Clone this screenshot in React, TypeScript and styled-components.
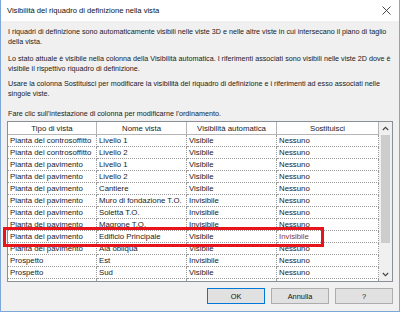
import React from "react";
import styled, {createGlobalStyle} from "styled-components";

const GlobalStyle = createGlobalStyle`
  html, body {
    margin: 0;
    padding: 0;
    background: #ffffff;
  }
  body {
    font-family: "Liberation Sans", Arial, sans-serif;
    color: #1a1a1a;
  }
`;

interface IRow {
  tipo: string;
  nome: string;
  auto: string;
  sost: string;
}

const rows: IRow[] = [
  {tipo: "Pianta del controsoffitto", nome: "Livello 1", auto: "Visibile", sost: "Nessuno"},
  {tipo: "Pianta del controsoffitto", nome: "Livello 2", auto: "Visibile", sost: "Nessuno"},
  {tipo: "Pianta del pavimento", nome: "Livello 1", auto: "Visibile", sost: "Nessuno"},
  {tipo: "Pianta del pavimento", nome: "Livello 2", auto: "Visibile", sost: "Nessuno"},
  {tipo: "Pianta del pavimento", nome: "Cantiere", auto: "Visibile", sost: "Nessuno"},
  {tipo: "Pianta del pavimento", nome: "Muro di fondazione T.O.", auto: "Invisibile", sost: "Nessuno"},
  {tipo: "Pianta del pavimento", nome: "Soletta T.O.", auto: "Invisibile", sost: "Nessuno"},
  {tipo: "Pianta del pavimento", nome: "Magrone T.O.", auto: "Invisibile", sost: "Nessuno"},
  {tipo: "Pianta del pavimento", nome: "Edificio Principale", auto: "Visibile", sost: "Invisibile"},
  {tipo: "Pianta del pavimento", nome: "Ala obliqua", auto: "Visibile", sost: "Nessuno"},
  {tipo: "Prospetto", nome: "Est", auto: "Invisibile", sost: "Nessuno"},
  {tipo: "Prospetto", nome: "Sud", auto: "Visibile", sost: "Nessuno"},
];

const columns = ["Tipo di vista", "Nome vista", "Visibilità automatica", "Sostituisci"];

const App = () => {
  return (
    <>
      <GlobalStyle/>
      <Window>
        <TitleBar>
          <span>Visibilità del riquadro di definizione nella vista</span>
          <CloseButton>
            <svg width="9" height="9" viewBox="0 0 9 9">
              <path d="M0.5 0.5 L8.5 8.5 M8.5 0.5 L0.5 8.5" stroke="#333" strokeWidth="0.9" fill="none"/>
            </svg>
          </CloseButton>
        </TitleBar>
        <Body>
          <Para gap={0}>
            I riquadri di definizione sono automaticamente visibili nelle viste 3D e nelle altre viste in cui intersecano il piano di taglio della vista.
          </Para>
          <Para gap={7}>
            Lo stato attuale è visibile nella colonna della Visibilità automatica. I riferimenti associati sono visibili nelle viste 2D dove è visibile il rispettivo riquadro di definizione.
          </Para>
          <Para gap={5}>
            Usare la colonna Sostituisci per modificare la visibilità del riquadro di definizione e i riferimenti ad esso associati nelle singole viste.
          </Para>
          <Para gap={10}>
            Fare clic sull'intestazione di colonna per modificarne l'ordinamento.
          </Para>
          <TableFrame>
            <Grid>
              <HeaderRow>
                {columns.map((c) => (
                  <HeaderCell key={c}>{c}</HeaderCell>
                ))}
              </HeaderRow>
              {rows.map((r, i) => (
                <Row key={i}>
                  <Cell>{r.tipo}</Cell>
                  <Cell>{r.nome}</Cell>
                  <Cell>{r.auto}</Cell>
                  <Cell changed={r.sost !== "Nessuno"}>{r.sost}</Cell>
                </Row>
              ))}
              <Row>
                <Cell/>
                <Cell/>
                <Cell/>
                <Cell/>
              </Row>
            </Grid>
            <ScrollBar>
              <ScrollArrow>
                <svg width="7" height="5" viewBox="0 0 7 5">
                  <path d="M0.8 4 L3.5 1.3 L6.2 4" stroke="#444" strokeWidth="1.1" fill="none"/>
                </svg>
              </ScrollArrow>
              <ScrollTrack>
                <Thumb/>
              </ScrollTrack>
              <ScrollArrow>
                <svg width="7" height="5" viewBox="0 0 7 5">
                  <path d="M0.8 1 L3.5 3.7 L6.2 1" stroke="#444" strokeWidth="1.1" fill="none"/>
                </svg>
              </ScrollArrow>
            </ScrollBar>
            <Highlight/>
          </TableFrame>
          <Footer>
            <Button primary>OK</Button>
            <Button>Annulla</Button>
            <Button>?</Button>
          </Footer>
        </Body>
      </Window>
    </>
  );
};

export default App;


const Window = styled.div`
  width: 400px;
  height: 312px;
  box-sizing: border-box;
  border: 1px solid #7fa6d8;
  border-top: none;
  background: #f0f0f0;
  display: flex;
  flex-direction: column;
  overflow: hidden;
`;

const TitleBar = styled.div`
  height: 21px;
  flex: none;
  background: #ffffff;
  display: flex;
  align-items: center;
  justify-content: space-between;
  padding: 0 7px 0 6px;
  font-size: 7.6px;
  color: #111;
`;

const CloseButton = styled.div`
  width: 12px;
  height: 12px;
  display: flex;
  align-items: center;
  justify-content: center;
`;

const Body = styled.div`
  flex: 1;
  padding: 6px 6px 0 6px;
  display: flex;
  flex-direction: column;
`;

const Para = styled.p<{ gap: number }>`
  margin: ${({gap}) => gap}px 0 0 0;
  font-size: 7.2px;
  line-height: 10px;
  padding-left: 1px;
`;

const TableFrame = styled.div`
  position: relative;
  margin-top: 2px;
  height: 161px;
  box-sizing: border-box;
  border: 1px solid #8a8f96;
  display: flex;
  background: #ffffff;
`;

const Grid = styled.div`
  flex: 1;
  overflow: hidden;
  font-size: 7.8px;
`;

const cols = "89px 90px 90px 102px";

const HeaderRow = styled.div`
  display: grid;
  grid-template-columns: ${cols};
  height: 13px;
  background: #ffffff;
`;

const HeaderCell = styled.div`
  box-sizing: border-box;
  border-right: 1px solid #b5b5b5;
  border-bottom: 1px solid #b5b5b5;
  display: flex;
  align-items: center;
  justify-content: center;
  white-space: nowrap;
  overflow: hidden;
`;

const Row = styled.div`
  display: grid;
  grid-template-columns: ${cols};
  height: 12px;
`;

const Cell = styled.div<{ changed?: boolean }>`
  box-sizing: border-box;
  border-right: 1px dotted #9a9a9a;
  border-bottom: 1px dotted #9a9a9a;
  padding-left: 2px;
  display: flex;
  align-items: center;
  white-space: nowrap;
  overflow: hidden;
  color: ${({changed}) => (changed ? "#8a3a2a" : "#1a1a1a")};
`;

const ScrollBar = styled.div`
  width: 13px;
  flex: none;
  background: #f0f0f0;
  display: flex;
  flex-direction: column;
`;

const ScrollArrow = styled.div`
  height: 13px;
  flex: none;
  display: flex;
  align-items: center;
  justify-content: center;
`;

const ScrollTrack = styled.div`
  flex: 1;
  padding: 0 2px;
`;

const Thumb = styled.div`
  height: 108px;
  background: #cdcdcd;
`;

const Highlight = styled.div`
  position: absolute;
  left: -5px;
  top: 105px;
  width: 321px;
  height: 20px;
  box-sizing: border-box;
  border: 3px solid #e8141c;
  pointer-events: none;
`;

const Footer = styled.div`
  display: flex;
  justify-content: flex-end;
  gap: 6px;
  margin-top: 6px;
`;

const Button = styled.div<{ primary?: boolean }>`
  width: 58px;
  height: 16px;
  box-sizing: border-box;
  border: 1px solid ${({primary}) => (primary ? "#0078d7" : "#adadad")};
  background: #e1e1e1;
  display: flex;
  align-items: center;
  justify-content: center;
  font-size: 7.4px;
  color: #111;
`;
